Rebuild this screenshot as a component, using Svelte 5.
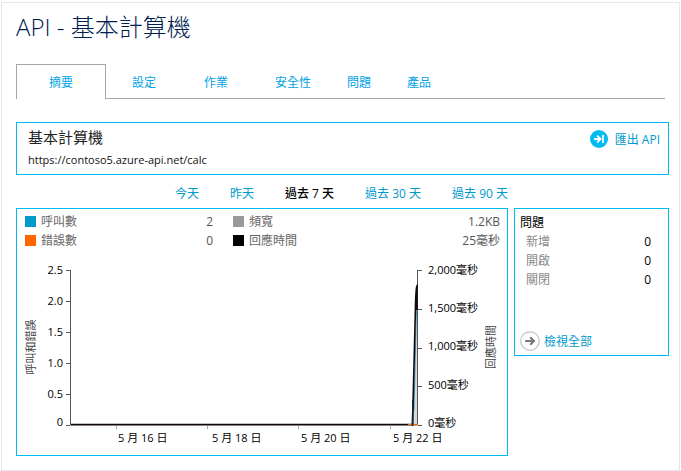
<script>
  const tabs = ['摘要', '設定', '作業', '安全性', '問題', '產品'];
  const ranges = ['今天', '昨天', '過去 7 天', '過去 30 天', '過去 90 天'];
  let tab = $state('摘要');
  let range = $state('過去 7 天');

  const metrics = [
    { name: '呼叫數', value: '2', color: '#0099cc' },
    { name: '頻寬', value: '1.2KB', color: '#999999' },
    { name: '錯誤數', value: '0', color: '#ff6600' },
    { name: '回應時間', value: '25毫秒', color: '#000000' }
  ];
  const issues = [
    { name: '新增', count: 0 },
    { name: '開啟', count: 0 },
    { name: '關閉', count: 0 }
  ];

  const leftTicks = ['2.5', '2.0', '1.5', '1.0', '0.5', '0'];
  const rightTicks = ['2,000毫秒', '1,500毫秒', '1,000毫秒', '500毫秒', '0毫秒'];
  const days = [
    { label: '5 月 16 日', x: 99, text: 101 },
    { label: '5 月 18 日', x: 190, text: 195 },
    { label: '5 月 20 日', x: 281, text: 284 },
    { label: '5 月 22 日', x: 373, text: 376 }
  ];
  const top = 20;
  const height = 155;
</script>

<main>
  <h1>API - 基本計算機</h1>

  <nav class="tabs">
    {#each tabs as name}
      <a href="#{name}" class:active={tab === name} onclick={() => (tab = name)}>{name}</a>
    {/each}
  </nav>

  <section class="panel summary">
    <div>
      <h2>基本計算機</h2>
      <p>https://contoso5.azure-api.net/calc</p>
    </div>
    <a class="export" href="#export">
      <svg width="18" height="18" viewBox="0 0 18 18" aria-hidden="true">
        <circle cx="9" cy="9" r="9" fill="#00bcf2" />
        <path d="M4 9h6M7.2 5.6 10.6 9l-3.4 3.4M13 5v8" fill="none" stroke="#fff" stroke-width="1.8" />
      </svg>
      <span>匯出 API</span>
    </a>
  </section>

  <div class="columns">
    <div class="left">
      <nav class="ranges">
        {#each ranges as name}
          <a href="#{name}" class:active={range === name} onclick={() => (range = name)}>{name}</a>
        {/each}
      </nav>

      <section class="panel usage">
        <dl class="metrics">
          {#each metrics as m}
            <div>
              <dt><i style="background: {m.color}"></i>{m.name}</dt>
              <dd>{m.value}</dd>
            </div>
          {/each}
        </dl>

        <svg class="chart" viewBox="0 0 490 205" role="img" aria-label="呼叫和錯誤 / 回應時間">
          <g class="axis">
            <path d="M53.5 {top}V{top + height}H400.5V{top}" />
            {#each leftTicks as _, i}
              <path d="M49 {top + i * 31 + 0.5}h4" />
            {/each}
            {#each rightTicks as _, i}
              <path d="M401 {Math.round(top + i * 38.75) + 0.5}h4" />
            {/each}
          </g>
          <g class="daytick">
            {#each days as d}
              <path d="M{d.x + 0.5} 176v3" />
            {/each}
          </g>
          <path d="M396 174 399 60 400 38V174Z" fill="#d5d9dc" />
          <path d="M397 160 399.6 54" stroke="#3f9fc4" stroke-width="1" />
          <path d="M54 174.5H395.5L398.4 60 Q398.8 38 400 36V60" fill="none" stroke="#150808" stroke-width="1.6" />
          <path d="M391 174.5h10" stroke="#ff6600" />
          <path d="M395.5 176 396 150" stroke="#123" stroke-width="1.6" />

          {#each leftTicks as t, i}
            <text class="end" x="46" y={top + 4 + i * 31 - (i === 5 ? 3 : 0)}>{t}</text>
          {/each}
          {#each rightTicks as t, i}
            <text x="411" y={Math.round(top + 4 + i * 38.2)}>{t}</text>
          {/each}
          {#each days as d}
            <text class="day" x={d.text} y="192">{d.label}</text>
          {/each}
          <text class="title" transform="translate(18 97) rotate(-90)">呼叫和錯誤</text>
          <text class="title" transform="translate(478 97) rotate(-90)">回應時間</text>
        </svg>
      </section>
    </div>

    <section class="panel issues">
      <h3>問題</h3>
      <dl>
        {#each issues as item}
          <div><dt>{item.name}</dt><dd>{item.count}</dd></div>
        {/each}
      </dl>
      <a href="#all">
        <svg width="20" height="20" viewBox="0 0 20 20" fill="none" aria-hidden="true">
          <circle cx="10" cy="10" r="9.3" stroke="#ccc" stroke-width="1.4" />
          <path d="M5.2 10h8.4M10.2 6.2 14 10l-3.8 3.8" stroke="#777" stroke-width="2" />
        </svg>
        <span>檢視全部</span>
      </a>
    </section>
  </div>
</main>

<style>
  :global(body) {
    background: #fff;
  }
  main {
    box-sizing: border-box;
    margin: 2px 1px 0;
    padding: 8px 10px 14px 14px;
    border: 1px solid #e6e6e6;
    font: 12px/19px 'Open Sans', 'Noto Sans CJK TC', sans-serif;
    color: #000;
  }
  h1,
  h2,
  h3,
  p,
  dl,
  dd {
    margin: 0;
    font-weight: 400;
  }
  a {
    color: #0099cc;
    text-decoration: none;
  }
  h1 {
    font-size: 24px;
    line-height: 32px;
    font-weight: 300;
    color: #002050;
  }
  .tabs {
    display: grid;
    grid-template-columns: 90px 76px 68px 86px 46px 74px;
    height: 34px;
    margin: 21px 4px 0 0;
    border-bottom: 1px solid #a6a6a9;
  }
  .tabs a {
    box-sizing: border-box;
    height: 35px;
    line-height: 38px;
    text-align: center;
    color: #00a2e8;
  }
  .tabs a.active {
    line-height: 36px;
    border: 1px solid #a6a6a9;
    border-bottom: 0;
    background: #fff;
  }
  .panel {
    box-sizing: border-box;
    border: 1px solid #00bcf2;
  }
  .summary {
    display: flex;
    justify-content: space-between;
    margin-top: 23px;
    padding: 3px 8px 2px 11px;
    min-height: 53px;
  }
  .summary h2 {
    font-size: 15px;
    line-height: 22px;
    color: #222;
  }
  .summary p {
    font-size: 11px;
    line-height: 24px;
    color: #111;
  }
  .export {
    display: flex;
    align-items: center;
    gap: 7px;
    height: 26px;
  }
  .columns {
    display: grid;
    grid-template-columns: minmax(0, 492fr) minmax(0, 155fr);
    gap: 6px;
    align-items: start;
  }
  .ranges {
    display: flex;
    justify-content: flex-end;
    gap: 31px;
    height: 33px;
    line-height: 38px;
  }
  .ranges a.active {
    color: #000;
    font-weight: 500;
  }
  .metrics {
    display: grid;
    grid-template-columns: 188px 1fr;
    column-gap: 20px;
    padding: 3px 7px 0 8px;
    color: #555;
  }
  .metrics div,
  .issues dl div {
    display: flex;
    justify-content: space-between;
  }
  .metrics dt {
    display: flex;
    align-items: center;
    gap: 5px;
    color: #666;
  }
  .metrics i {
    width: 11px;
    height: 11px;
  }
  .chart {
    display: block;
    width: 100%;
    font-size: 11px;
  }
  .axis path {
    fill: none;
    stroke: #555;
  }
  .daytick path {
    stroke: #aaa;
  }
  .end {
    text-anchor: end;
  }
  .title {
    text-anchor: middle;
    fill: #444;
  }
  .issues {
    margin-top: 33px;
    min-height: 148px;
    padding: 4px 17px 4px 5px;
    display: flex;
    flex-direction: column;
  }
  .issues h3 {
    font-size: 12px;
  }
  .issues dl {
    padding-left: 6px;
  }
  .issues dt {
    color: #888;
  }
  .issues a {
    display: flex;
    align-items: center;
    gap: 4px;
    margin-top: auto;
  }
</style>
